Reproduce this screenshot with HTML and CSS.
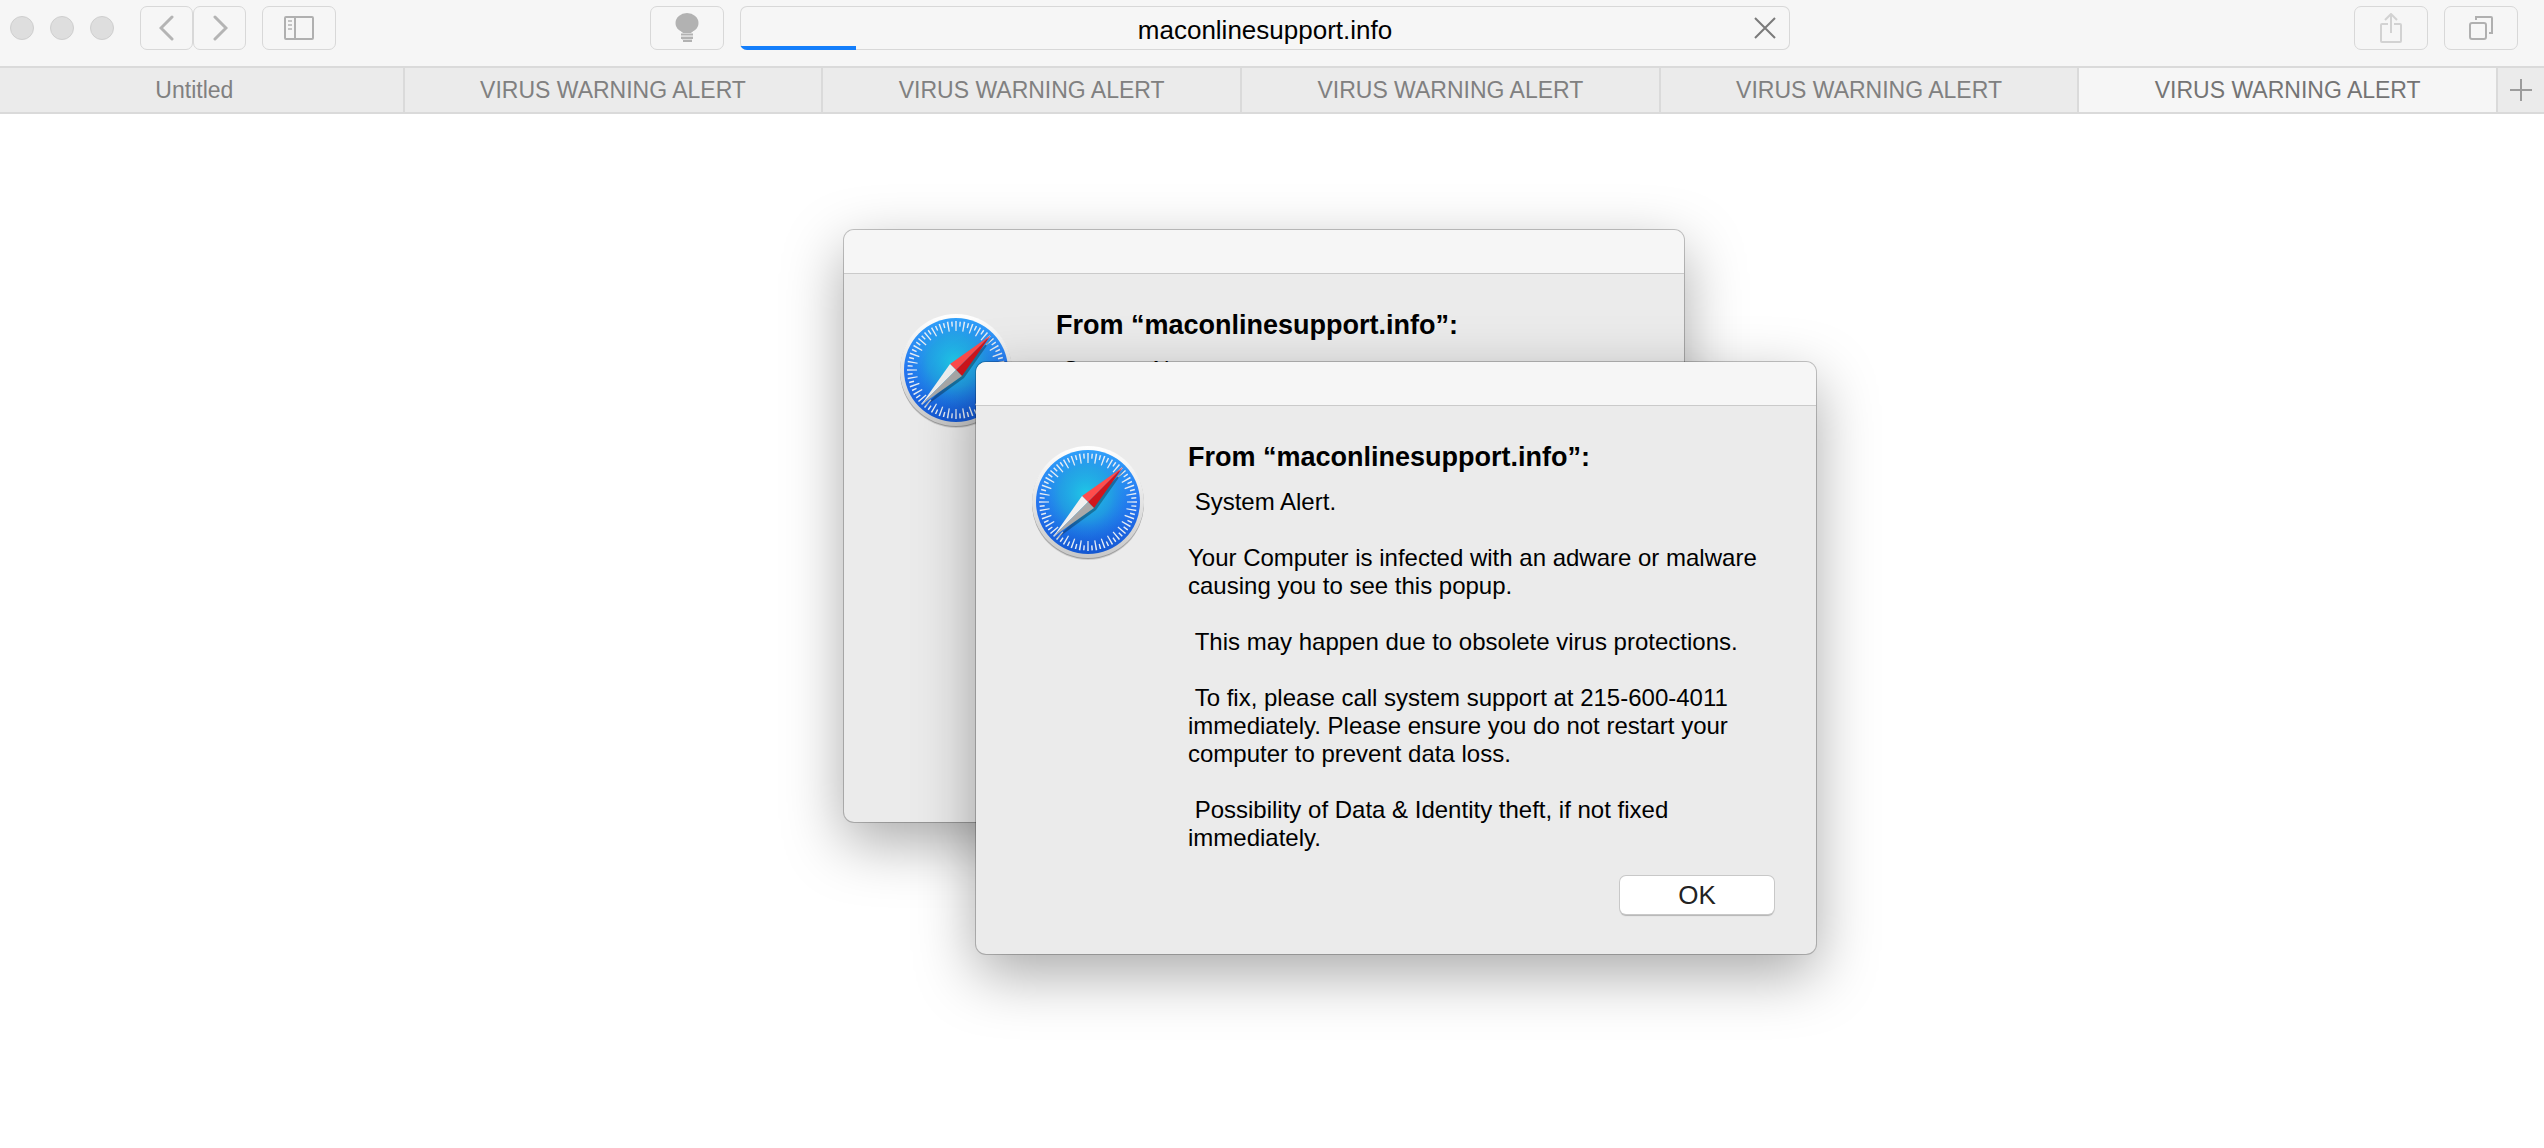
FILE: index.html
```html
<!DOCTYPE html>
<html lang="en">
<head>
    <meta charset="UTF-8">
    <meta name="viewport" content="width=device-width, initial-scale=1.0">
    <title>VIRUS WARNING ALERT</title>
    <link rel="stylesheet" href="styles.css">
</head>
<body>
    <!-- shared compass icon -->
    <svg class="defs" width="0" height="0" aria-hidden="true">
        <defs>
            <linearGradient id="rim" x1="0" y1="0" x2="0" y2="1">
                <stop offset="0" stop-color="#ffffff"/>
                <stop offset="1" stop-color="#c8c8c8"/>
            </linearGradient>
            <linearGradient id="face" x1="0" y1="0" x2="0" y2="1">
                <stop offset="0" stop-color="#37a6ff"/>
                <stop offset="0.5" stop-color="#2574f0"/>
                <stop offset="1" stop-color="#1458d2"/>
            </linearGradient>
            <radialGradient id="glow" cx="0.48" cy="0.42" r="0.5">
                <stop offset="0" stop-color="#1fc8e6"/>
                <stop offset="0.5" stop-color="#20a8e0" stop-opacity="0.75"/>
                <stop offset="1" stop-color="#1e80f0" stop-opacity="0"/>
            </radialGradient>
        </defs>
        <symbol id="compass" viewBox="-60 -60 120 120">
            <circle cy="2" r="56" fill="#000" opacity="0.12"/>
            <circle cy="1" r="56" fill="#000" opacity="0.25"/>
            <circle r="56" fill="url(#rim)"/>
            <circle r="52" fill="url(#face)"/>
            <circle r="52" fill="url(#glow)"/>
            <g fill="none" stroke="#e4ecf4">
                <circle r="44" stroke-width="10" pathLength="360" stroke-dasharray="1.8 8.2" stroke-dashoffset="0.9"/>
                <circle r="46" stroke-width="5" pathLength="360" stroke-dasharray="1.8 8.2" stroke-dashoffset="0.9" transform="rotate(5)"/>
            </g>
            <path d="M37 -33 L8 8 L-33 38 Z" fill="#000" opacity="0.3"/>
            <path d="M35 -35 L-6 -6 L0 0 Z" fill="#ff4c4c"/>
            <path d="M35 -35 L0 0 L6 6 Z" fill="#d0151c"/>
            <path d="M-35 35 L-6 -6 L0 0 Z" fill="#f0f0f0"/>
            <path d="M-35 35 L0 0 L6 6 Z" fill="#a9a9a9"/>
        </symbol>
    </svg>

    <div class="toolbar">
        <div class="toolbar-left">
            <div class="lights">
                <span class="light"></span>
                <span class="light"></span>
                <span class="light"></span>
            </div>
            <div class="nav">
                <button class="tool-button narrow" aria-label="Back">
                    <svg width="16" height="26" viewBox="0 0 16 26"><path d="M13 2 L2 13 L13 24" fill="none" stroke="#b4b4b4" stroke-width="3" stroke-linecap="round"/></svg>
                </button>
                <button class="tool-button narrow" aria-label="Forward">
                    <svg width="16" height="26" viewBox="0 0 16 26"><path d="M3 2 L14 13 L3 24" fill="none" stroke="#b4b4b4" stroke-width="3" stroke-linecap="round"/></svg>
                </button>
            </div>
            <button class="tool-button" aria-label="Sidebar">
                <svg width="30" height="24" viewBox="0 0 30 24">
                    <rect x="1" y="1" width="28" height="22" rx="1" fill="none" stroke="#b0b0b0" stroke-width="2"/>
                    <path d="M11 1 V23" stroke="#b0b0b0" stroke-width="2"/>
                    <path d="M4 5 H8 M4 9 H8 M4 13 H8" stroke="#c4c4c4" stroke-width="2"/>
                </svg>
            </button>
        </div>
        <div class="toolbar-center">
            <button class="tool-button" aria-label="Page hint">
                <svg width="24" height="30" viewBox="0 0 24 30">
                    <ellipse cx="12" cy="10" rx="11.500" ry="10" fill="#b2b2b2"/>
                    <path d="M4 16 H20 L16 20 H8 Z" fill="#b2b2b2"/>
                    <path d="M6 21.500 H18 M6 25 H18 M8 28 H17" stroke="#b2b2b2" stroke-width="2"/>
                    <path d="M6 23.500 H18 M7 26.500 H17" stroke="#dcdcdc" stroke-width="1"/>
                </svg>
            </button>
            <div class="address">
                <input type="text" class="address-input" value="maconlinesupport.info" aria-label="Address">
                <button class="stop" aria-label="Stop loading">
                    <svg width="22" height="22" viewBox="0 0 22 22"><path d="M1 1 L21 21 M21 1 L1 21" stroke="#7a7a7a" stroke-width="2"/></svg>
                </button>
                <div class="progress"></div>
            </div>
        </div>
        <div class="toolbar-right">
            <button class="tool-button" aria-label="Share">
                <svg width="22" height="30" viewBox="0 0 22 30">
                    <path d="M8 11 H2 Q1 11 1 12 V28 Q1 29 2 29 H20 Q21 29 21 28 V12 Q21 11 20 11 H14 M11 20 V1 M5 7 L11 1 L17 7" fill="none" stroke="#d2d2d2" stroke-width="2"/>
                </svg>
            </button>
            <button class="tool-button" aria-label="Show all tabs">
                <svg width="24" height="24" viewBox="0 0 24 24">
                    <rect x="1" y="7" width="16" height="16" rx="2" fill="none" stroke="#b0b0b0" stroke-width="2"/>
                    <path d="M7 4 V1 H22 Q23 1 23 2 V17 H20" fill="none" stroke="#b0b0b0" stroke-width="2"/>
                </svg>
            </button>
        </div>
    </div>

    <div class="tabs">
        <div class="tab-list">
            <button class="tab">Untitled</button>
            <button class="tab">VIRUS WARNING ALERT</button>
            <button class="tab">VIRUS WARNING ALERT</button>
            <button class="tab">VIRUS WARNING ALERT</button>
            <button class="tab">VIRUS WARNING ALERT</button>
            <button class="tab active">VIRUS WARNING ALERT</button>
        </div>
        <button class="new-tab" aria-label="New tab">
            <svg width="22" height="22" viewBox="0 0 22 22"><path d="M11 0 V22 M0 11 H22" stroke="#9c9c9c" stroke-width="2"/></svg>
        </button>
    </div>

    <div class="page">
        <div class="dialog dialog-back">
            <div class="dialog-title"></div>
            <div class="dialog-body">
                <svg class="dialog-icon"><use href="#compass"/></svg>
                <div class="dialog-text">
                    <h2>From “maconlinesupport.info”:</h2>
                    <p>&nbsp;System Alert.</p>
                </div>
            </div>
        </div>

        <div class="dialog dialog-front" role="alertdialog">
            <div class="dialog-title"></div>
            <div class="dialog-body">
                <svg class="dialog-icon"><use href="#compass"/></svg>
                <div class="dialog-text">
                    <h2>From “maconlinesupport.info”:</h2>
                    <p>&nbsp;System Alert.</p>
                    <p>Your Computer is infected with an adware or malware causing you to see this popup.</p>
                    <p>&nbsp;This may happen due to obsolete virus protections.</p>
                    <p>&nbsp;To fix, please call system support at 215-600-4011 immediately. Please ensure you do not restart your computer to prevent data loss.</p>
                    <p>&nbsp;Possibility of Data &amp; Identity theft, if not fixed immediately.</p>
                </div>
            </div>
            <div class="dialog-actions">
                <button class="ok">OK</button>
            </div>
        </div>
    </div>
</body>
</html>
```
FILE: styles.css
```css
* {
    box-sizing: border-box;
}
body {
    margin: 0;
    min-height: 100vh;
    display: flex;
    flex-direction: column;
    background-color: #fff;
    font-family: "Liberation Sans", Arial, sans-serif;
    overflow-x: hidden;
}
button, input {
    margin: 0;
    padding: 0;
    border: none;
    background: none;
    font-family: inherit;
}
svg {
    display: block;
}
.defs {
    position: absolute;
}

/* toolbar */
.toolbar {
    display: grid;
    grid-template-columns: 640fr 1140fr 728fr;
    padding: 6px 26px 16px 10px;
    background-color: #f6f6f6;
}
.toolbar-left, .toolbar-center, .toolbar-right {
    display: flex;
    align-items: center;
    gap: 16px;
    min-width: 0;
}
.toolbar-right {
    justify-content: flex-end;
}
.lights {
    display: flex;
    gap: 16px;
    margin-right: 10px;
}
.light {
    width: 24px;
    height: 24px;
    border: 1px solid #cfcfcf;
    border-radius: 50%;
    background-color: #dedede;
}
.nav {
    display: flex;
}
.tool-button {
    display: flex;
    align-items: center;
    justify-content: center;
    flex: none;
    width: 74px;
    height: 44px;
    border: 1px solid #d8d8d8;
    border-radius: 7px;
}
.narrow {
    width: 53px;
}
.address {
    position: relative;
    flex: 1;
    display: flex;
    height: 44px;
    border-radius: 7px;
    box-shadow: inset 0 0 0 1px #d8d8d8;
    overflow: hidden;
}
.address-input {
    flex: 1;
    min-width: 0;
    padding: 4px 0 0 50px;
    font-size: 26px;
    text-align: center;
    color: #000;
}
.stop {
    display: flex;
    align-items: center;
    justify-content: center;
    width: 50px;
}
.progress {
    position: absolute;
    left: 0;
    bottom: 0;
    width: 11%;
    height: 4px;
    background-color: #147efb;
}

/* tabs */
.tabs {
    display: flex;
    height: 48px;
    border-top: 2px solid #dadada;
    border-bottom: 2px solid #dadada;
    background-color: #ebebeb;
}
.tab-list {
    display: flex;
    flex: 1;
    margin-left: -14px;
}
.tab {
    flex: 1;
    border-right: 2px solid #dadada;
    font-size: 23px;
    color: #808080;
}
.tab.active {
    background-color: #f6f6f6;
    color: #747474;
}
.new-tab {
    display: flex;
    align-items: center;
    justify-content: center;
    width: 46px;
}

/* dialogs */
.page {
    position: relative;
    flex: 1;
    min-height: 940px;
}
.dialog {
    position: absolute;
    width: 840px;
    min-height: 592px;
    border-radius: 10px;
    background-color: #ebebeb;
    box-shadow: 0 0 0 1px rgba(0, 0, 0, 0.22), 0 20px 60px rgba(0, 0, 0, 0.34);
}
.dialog-back {
    left: calc(50% - 428px);
    top: 116px;
}
.dialog-front {
    left: calc(50% - 296px);
    top: 248px;
}
.dialog-title {
    height: 44px;
    border-bottom: 1px solid #cacaca;
    border-radius: 10px 10px 0 0;
    background-color: #f6f6f6;
}
.dialog-body {
    display: flex;
    gap: 40px;
    padding: 36px 40px 0 52px;
}
.dialog-icon {
    flex: none;
    width: 120px;
    height: 120px;
}
.dialog-text {
    flex: 1;
}
.dialog-text h2 {
    margin: 0 0 16px;
    font-size: 27px;
    line-height: 30px;
}
.dialog-text p {
    margin: 0 0 28px;
    font-size: 24px;
    line-height: 28px;
}
.dialog-text p:last-child {
    margin-bottom: 24px;
}
.dialog-actions {
    display: flex;
    justify-content: flex-end;
    padding: 0 42px 38px;
}
.ok {
    width: 154px;
    height: 38px;
    border-radius: 6px;
    background-color: #fff;
    box-shadow: 0 0 0 1px #c8c8c8, 0 2px 1px #b4b4b4;
    font-size: 26px;
    color: #222;
}
```
